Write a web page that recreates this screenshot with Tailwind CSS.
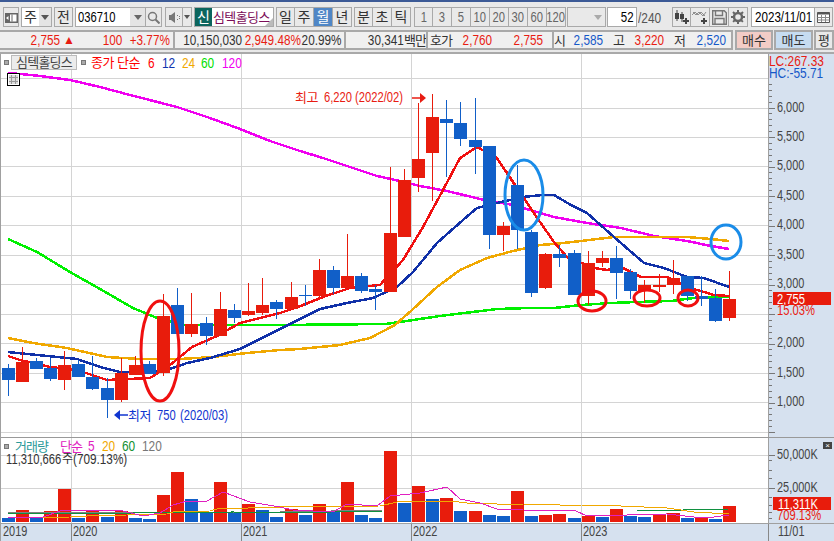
<!DOCTYPE html>
<html lang="ko">
  <head>
    <meta charset="UTF-8" />
    <meta name="viewport" content="width=device-width, initial-scale=1.0" />
    <title>심텍홀딩스 차트</title>
    <script src="https://cdn.jsdelivr.net/npm/@tailwindcss/browser@4"></script>
  </head>
  <body class="w-[834px] h-[541px] overflow-hidden flex flex-col bg-[#e9e9e9] text-[#333] text-[14px] leading-none whitespace-nowrap font-['Liberation_Sans','Noto_Sans_CJK_KR',sans-serif]">
    <!-- title strip -->
    <div class="h-[2px] bg-[#3c5a96]"></div>

    <!-- toolbar -->
    <div class="h-[26px] pt-[5px] flex items-start">
      <div class="ml-[3px] w-[16px] h-[20px] border border-[#a9a9a9] flex items-center justify-center">
        <svg width="13" height="13" viewBox="0 0 13 13"><path d="M0 2h13v10H0z" fill="#666"/><path d="M5 3.500h6.500v7H5z" fill="#fff"/><path d="M7 3.500v7" stroke="#666"/><path d="M3.500 5L1 7l2.500 2z" fill="#fff"/></svg>
      </div>
      <div class="ml-[2px] w-[31px] h-[20px] border border-[#a9a9a9] flex">
        <div class="w-[17px] bg-white flex items-center justify-center">주</div>
        <div class="flex-1 bg-[#e4e4e4] flex items-center justify-center"><div class="border-x-[4px] border-x-transparent border-t-[5px] border-t-[#555]"></div></div>
      </div>
      <div class="ml-[2px] w-[19px] h-[20px] border border-[#a9a9a9] flex items-center justify-center">전</div>
      <div class="ml-[2px] w-[87px] h-[20px] border border-[#a9a9a9] flex">
        <div class="w-[54px] bg-white flex items-center pl-[2px] text-black"><span class="origin-left scale-x-[.8]">036710</span></div>
        <div class="w-[15px] bg-[#e4e4e4] flex items-center justify-center"><div class="border-x-[4px] border-x-transparent border-t-[5px] border-t-[#666]"></div></div>
        <div class="flex-1 border-l border-[#a9a9a9] flex items-center justify-center">
          <svg width="13" height="13" viewBox="0 0 13 13" fill="none" stroke="#777"><circle cx="5.500" cy="5.500" r="4" stroke-width="1.500"/><path d="M8.500 8.500L12.500 12.500" stroke-width="2"/></svg>
        </div>
      </div>
      <div class="ml-[3px] w-[27px] h-[20px] border border-[#a9a9a9] flex">
        <div class="w-[16px] flex items-center justify-center">
          <svg width="13" height="13" viewBox="0 0 13 13" fill="#777"><path d="M1 4h2l4-3v11L3 9H1z"/><path d="M9 4h1v1H9zM11 5h1v1h-1zM9 8h1v1H9zM11 7h1v1h-1z"/></svg>
        </div>
        <div class="flex-1 flex items-center justify-center border-l border-[#a9a9a9]"><div class="border-x-[3px] border-x-transparent border-t-[4px] border-t-[#555]"></div></div>
      </div>
      <div class="ml-[2px] w-[80px] h-[20px] border border-[#a9a9a9] flex relative">
        <div class="w-[17px] bg-[#0b655d] text-white flex items-center justify-center">신</div>
        <div class="flex-1 bg-white text-[#7b0c58] flex items-center pl-[1px] text-[13px] tracking-[-0.6px]">심텍홀딩스</div>
        <div class="absolute right-0 bottom-0 border-l-[8px] border-l-transparent border-b-[8px] border-b-[#bbb]"></div>
      </div>
      <div class="ml-[2px] flex">
        <div class="w-[19px] h-[20px] border border-[#a9a9a9] flex items-center justify-center">일</div>
        <div class="w-[19px] h-[20px] border border-l-0 border-[#a9a9a9] flex items-center justify-center">주</div>
        <div class="w-[19px] h-[20px] border border-l-0 border-[#a9a9a9] bg-[#4f86c6] text-white flex items-center justify-center">월</div>
        <div class="w-[19px] h-[20px] border border-l-0 border-[#a9a9a9] flex items-center justify-center">년</div>
      </div>
      <div class="ml-[2px] flex">
        <div class="w-[19px] h-[20px] border border-[#a9a9a9] flex items-center justify-center">분</div>
        <div class="w-[19px] h-[20px] border border-l-0 border-[#a9a9a9] flex items-center justify-center">초</div>
        <div class="w-[19px] h-[20px] border border-l-0 border-[#a9a9a9] flex items-center justify-center">틱</div>
      </div>
      <div class="ml-[3px] flex text-[#666]">
        <div class="w-[19px] h-[20px] border border-[#a9a9a9] flex items-center justify-center"><span class="scale-x-[.8]">1</span></div>
        <div class="w-[19px] h-[20px] border border-l-0 border-[#a9a9a9] flex items-center justify-center"><span class="scale-x-[.8]">3</span></div>
        <div class="w-[19px] h-[20px] border border-l-0 border-[#a9a9a9] flex items-center justify-center"><span class="scale-x-[.8]">5</span></div>
        <div class="w-[19px] h-[20px] border border-l-0 border-[#a9a9a9] flex items-center justify-center"><span class="scale-x-[.8]">10</span></div>
        <div class="w-[19px] h-[20px] border border-l-0 border-[#a9a9a9] flex items-center justify-center"><span class="scale-x-[.8]">20</span></div>
        <div class="w-[19px] h-[20px] border border-l-0 border-[#a9a9a9] flex items-center justify-center"><span class="scale-x-[.8]">30</span></div>
        <div class="w-[19px] h-[20px] border border-l-0 border-[#a9a9a9] flex items-center justify-center"><span class="scale-x-[.8]">60</span></div>
        <div class="w-[19px] h-[20px] border border-l-0 border-[#a9a9a9] flex items-center justify-center"><span class="scale-x-[.8]">120</span></div>
      </div>
      <div class="ml-[1px] w-[39px] h-[20px] border border-[#a9a9a9] flex justify-end">
        <div class="w-[14px] flex items-center justify-center"><div class="border-x-[4px] border-x-transparent border-t-[5px] border-t-[#aaa]"></div></div>
      </div>
      <div class="ml-[1px] w-[30px] h-[20px] border border-[#a9a9a9] bg-white text-black flex items-center justify-end pr-[2px]"><span class="origin-right scale-x-[.82]">52</span></div>
      <div class="w-[32px] text-[#555] pt-[4px] pl-[1px]"><span class="block origin-left scale-x-[.85]">/240</span></div>
      <div class="ml-[3px] flex">
        <div class="w-[19px] h-[20px] border border-[#a9a9a9] flex items-center justify-center">
          <svg width="16" height="15" viewBox="0 0 16 15"><path d="M3 0v11M8 2v10" stroke="#444"/><path d="M1 3h4v6H1zM6 4h4v5H6z" fill="#444"/><path d="M12 8v6M9 11h6" stroke="#444" stroke-width="2"/></svg>
        </div>
        <div class="w-[19px] h-[20px] border border-l-0 border-[#a9a9a9] flex items-center justify-center">
          <svg width="16" height="15" viewBox="0 0 16 15" fill="none"><path d="M0 5l3-3 3 3 3-3 4 4M1 2l3 3 3-3 4 4 3-4" stroke="#777" stroke-width=".8"/><path d="M12 8v6M9 11h6" stroke="#444" stroke-width="2"/></svg>
        </div>
        <div class="w-[19px] h-[20px] border border-l-0 border-[#a9a9a9] flex items-center justify-center">
          <svg width="15" height="15" viewBox="0 0 15 15"><path d="M.7.700h11.500l2.100 2.100v11.500H.7z" fill="none" stroke="#777" stroke-width="1.400"/><path d="M3.500 1v4.500h7V1M3 14V8.500h9V14" fill="none" stroke="#777" stroke-width="1.400"/></svg>
        </div>
        <div class="w-[19px] h-[20px] border border-l-0 border-[#a9a9a9] flex items-center justify-center">
          <svg width="14" height="14" viewBox="0 0 14 14"><circle cx="7" cy="7" r="4" fill="none" stroke="#666" stroke-width="2.500"/><path d="M7 0v14M0 7h14M2 2l10 10M12 2L2 12" stroke="#666" stroke-width="2" stroke-dasharray="2.500 9 2.500"/></svg>
        </div>
      </div>
      <div class="ml-[3px] w-[64px] h-[20px] border border-[#a9a9a9] bg-white text-black flex items-center pl-[3px]"><span class="origin-left scale-x-[.83]">2023/11/01</span></div>
      <div class="w-[18px] h-[20px] border border-l-0 border-[#a9a9a9] flex items-center justify-center">
        <svg width="13" height="12" viewBox="0 0 13 12"><path d="M.5 1.500h12v10H.5z" fill="#fff" stroke="#555"/><path d="M.5 2.500h12" stroke="#555" stroke-width="2"/><path d="M.5 6.500h12M.5 9h12M4.500 4v7M8.500 4v7" stroke="#888"/></svg>
      </div>
    </div>

    <!-- quote row -->
    <div class="h-[22px] pt-[2px] flex">
      <div class="w-[173px] h-[20px] bg-[#f0f0f0] border-y-2 border-[#a9a9a9] flex items-center text-[#e81c12]">
        <span class="w-[60px] flex justify-end"><span class="origin-right scale-x-[.84]">2,755</span></span>
        <span class="w-[15px] text-right text-[12px]">▲</span>
        <span class="w-[47px] flex justify-end"><span class="origin-right scale-x-[.84]">100</span></span>
        <span class="w-[48px] flex justify-end"><span class="origin-right scale-x-[.84]">+3.77%</span></span>
      </div>
      <div class="w-[171px] h-[20px] bg-[#f0f0f0] border-2 border-r-0 border-[#a9a9a9] flex items-center">
        <span class="w-[67px] flex justify-end"><span class="origin-right scale-x-[.84]">10,150,030</span></span>
        <span class="w-[59px] flex justify-end text-[#e81c12]"><span class="origin-right scale-x-[.84]">2,949.48%</span></span>
        <span class="w-[40px] flex justify-end"><span class="origin-right scale-x-[.84]">20.99%</span></span>
      </div>
      <div class="w-[82px] h-[20px] bg-[#f0f0f0] border-2 border-r-0 border-[#a9a9a9] flex items-center justify-end">
        <span class="origin-right scale-x-[.84]">30,341</span><span class="text-[13px] tracking-[-1px]">백만</span>
      </div>
      <div class="w-[126px] h-[20px] bg-[#f0f0f0] border-2 border-r-0 border-[#a9a9a9] flex items-center">
        <span class="w-[24px] text-[13px] text-right tracking-[-1px]">호가</span>
        <span class="w-[40px] flex justify-end text-[#e81c12]"><span class="origin-right scale-x-[.84]">2,760</span></span>
        <span class="w-[51px] flex justify-end text-[#e81c12]"><span class="origin-right scale-x-[.84]">2,755</span></span>
      </div>
      <div class="w-[181px] h-[20px] bg-[#f0f0f0] border-2 border-[#a9a9a9] flex items-center">
        <span class="w-[11px] text-[13px] text-right">시</span>
        <span class="w-[38px] flex justify-end text-[#1558c8]"><span class="origin-right scale-x-[.84]">2,585</span></span>
        <span class="w-[22px] text-[13px] text-right">고</span>
        <span class="w-[39px] flex justify-end text-[#e81c12]"><span class="origin-right scale-x-[.84]">3,220</span></span>
        <span class="w-[22px] text-[13px] text-right">저</span>
        <span class="w-[40px] flex justify-end text-[#1558c8]"><span class="origin-right scale-x-[.84]">2,520</span></span>
      </div>
      <div class="ml-[2px] w-[38px] h-[20px] bg-[#f2ccc6] border-2 border-[#a9a9a9] flex items-center justify-center text-[13px]">매수</div>
      <div class="ml-[1px] w-[39px] h-[20px] bg-[#c6dcf1] border-2 border-[#a9a9a9] flex items-center justify-center text-[13px]">매도</div>
      <div class="ml-[1px] w-[20px] h-[20px] border-2 border-[#a9a9a9] flex items-center justify-center text-[13px]">평</div>
    </div>

    <!-- chart -->
    <div class="mt-[2px] border-t-[2px] border-[#a9a9a9] h-[489px] relative bg-white shrink-0">
      <svg id="chart" class="block" width="834" height="487" viewBox="0 54 834 487"></svg>

      <!-- price legend -->
      <div class="absolute left-[4px] top-[1px] flex items-center">
        <div class="w-[5px] h-[5px] bg-[#aaa] border border-[#777]"></div>
        <div class="ml-[2px] w-[66px] h-[15px] bg-[#ececec] border border-[#bbb] text-[13px] text-[#444] flex items-center justify-center tracking-[-0.8px]">심텍홀딩스</div>
        <div class="ml-[4px] w-[5px] h-[5px] bg-[#aaa] border border-[#777]"></div>
        <span class="ml-[5px] w-[57px] text-[13px] text-[#f00] tracking-[-0.5px]">종가 단순</span>
        <span class="w-[14px] origin-left scale-x-[.85] text-[#f00]">6</span>
        <span class="w-[20px] origin-left scale-x-[.85] text-[#1035b0]">12</span>
        <span class="w-[19px] origin-left scale-x-[.85] text-[#f0a800]">24</span>
        <span class="w-[21px] origin-left scale-x-[.85] text-[#00e000]">60</span>
        <span class="origin-left scale-x-[.85] text-[#f000f0]">120</span>
      </div>
      <div class="absolute left-[7px] top-[19px] w-[13px] h-[13px] border border-black bg-white p-[1px]">
        <div class="w-full h-full bg-[#999] grid grid-cols-3 grid-rows-3 gap-[1px]">
          <div class="bg-[#ddd]"></div><div class="bg-[#ddd]"></div><div class="bg-[#ddd]"></div>
          <div class="bg-[#ddd]"></div><div class="bg-[#ddd]"></div><div class="bg-[#ddd]"></div>
          <div class="bg-[#ddd]"></div><div class="bg-[#ddd]"></div><div class="bg-[#ddd]"></div>
        </div>
      </div>

      <!-- price annotations -->
      <div class="absolute left-[295px] top-[36px] flex items-center text-[#e81c12]">
        <span class="w-[29px] text-[13px] tracking-[-0.5px]">최고</span>
        <span class="w-[31px] origin-left scale-x-[.8]">6,220</span>
        <span class="origin-left scale-x-[.8]">(2022/02)</span>
      </div>
      <div class="absolute left-[128px] top-[354px] flex items-center text-[#1035d0]">
        <span class="w-[29px] text-[13px] tracking-[-0.5px]">최저</span>
        <span class="w-[23px] origin-left scale-x-[.8]">750</span>
        <span class="origin-left scale-x-[.8]">(2020/03)</span>
      </div>

      <!-- LC / HC -->
      <div class="absolute left-[769px] top-[1px] h-[12px] leading-[12px] origin-left scale-x-[.85] text-[#e81c12]">LC:267.33</div>
      <div class="absolute left-[769px] top-[13px] h-[12px] leading-[12px] origin-left scale-x-[.85] text-[#1558c8]">HC:-55.71</div>

      <!-- current price tag -->
      <div class="absolute left-[773px] top-[238px] w-[58px] h-[13px] bg-[#e81c0c] text-white flex items-center pl-[4px]"><span class="origin-left scale-x-[.8]">2,755</span></div>
      <div class="absolute left-[777px] top-[251px] h-[11px] leading-[11px] origin-left scale-x-[.8] text-[#e81c12]">15.03%</div>

      <!-- volume legend -->
      <div class="absolute left-[4px] top-[385px] flex items-center">
        <div class="w-[5px] h-[5px] bg-[#aaa] border border-[#777]"></div>
        <span class="ml-[6px] w-[45px] text-[13px] text-[#2a9a9a] tracking-[-1px]">거래량</span>
        <span class="w-[28px] text-[13px] text-[#e020c0] tracking-[-1px]">단순</span>
        <span class="w-[14px] origin-left scale-x-[.85] text-[#e020c0]">5</span>
        <span class="w-[20px] origin-left scale-x-[.85] text-[#f0a800]">20</span>
        <span class="w-[20px] origin-left scale-x-[.85] text-[#109030]">60</span>
        <span class="origin-left scale-x-[.85] text-[#777]">120</span>
      </div>
      <div class="absolute left-[6px] top-[398px] flex items-center text-[#333]">
        <span class="w-[56px] origin-left scale-x-[.8]">11,310,666</span>
        <span class="w-[11px] text-[12px]">주</span>
        <span class="origin-left scale-x-[.84]">(709.13%)</span>
      </div>

      <!-- volume tag -->
      <div class="absolute left-[773px] top-[443px] w-[58px] h-[13px] bg-[#e81c0c] text-white flex items-center pl-[5px]"><span class="origin-left scale-x-[.8]">11,311K</span></div>
      <div class="absolute left-[777px] top-[456px] h-[11px] leading-[11px] origin-left scale-x-[.8] text-[#e81c12]">709.13%</div>
      <div class="absolute left-[823px] top-[388px] w-[9px] h-[7px] bg-[#444] text-white text-[8px] flex items-center justify-center">×</div>

      <!-- x axis -->
      <div class="absolute left-[3px] top-[470px] origin-left scale-x-[.78] text-[#444]">2019</div>
      <div class="absolute left-[73px] top-[470px] origin-left scale-x-[.78] text-[#444]">2020</div>
      <div class="absolute left-[243px] top-[470px] origin-left scale-x-[.78] text-[#444]">2021</div>
      <div class="absolute left-[413px] top-[470px] origin-left scale-x-[.78] text-[#444]">2022</div>
      <div class="absolute left-[583px] top-[470px] origin-left scale-x-[.78] text-[#444]">2023</div>
      <div class="absolute left-[778px] top-[470px] origin-left scale-x-[.78] text-[#444]">11/01</div>
    </div>

    <script>
      // [x, bodyTop, bodyBottom, wickTop, wickBottom, color]
      const candles = [
        [2,368,380,364,396,"b"],[16,362,382,347,382,"r"],[30,361,369,358,369,"b"],[44,368,379,358,381,"b"],
        [58,365,380,351,390,"r"],[72,364,377,360,377,"b"],[86,377,389,356,390,"b"],[101,388,400,378,418,"b"],
        [115,373,400,358,402,"r"],[129,365,375,356,375,"r"],[143,364,374,361,374,"b"],[157,316,373,294,376,"r"],
        [171,305,334,288,334,"b"],[185,324,334,293,337,"r"],[200,323,336,317,345,"b"],[214,309,336,292,336,"r"],
        [228,310,318,304,323,"b"],[242,311,315,283,316,"r"],[256,305,313,278,315,"r"],[270,302,309,300,319,"b"],
        [285,297,309,282,309,"r"],[299,295,296,285,306,"b"],[313,270,296,259,298,"r"],[327,270,288,266,294,"b"],
        [341,276,288,234,288,"r"],[355,276,291,273,293,"b"],[369,289,292,285,310,"b"],[384,233,292,167,292,"r"],
        [398,180,237,169,237,"r"],[412,159,178,103,192,"r"],[426,117,153,94,201,"r"],[440,119,123,100,177,"b"],
        [454,123,139,102,146,"b"],[469,140,147,98,174,"b"],[483,146,235,146,249,"b"],[497,226,235,222,251,"r"],
        [511,185,230,165,249,"b"],[525,232,293,230,297,"b"],[539,254,288,253,289,"r"],[553,254,258,245,267,"b"],
        [568,253,295,250,295,"b"],[582,263,296,251,305,"r"],[596,258,263,251,267,"r"],[610,258,273,246,299,"b"],
        [624,272,291,269,299,"b"],[638,285,291,280,303,"r"],[653,285,287,274,292,"r"],[667,278,285,260,294,"r"],
        [681,276,296,276,301,"b"],[695,296,299,276,306,"b"],[709,298,321,289,322,"b"],[723,299,318,271,321,"r"],
      ];
      // volume bar tops, same order as candles
      const volumes = [
        [518,"b"],[510,"r"],[518,"b"],[511,"r"],[489,"r"],[518,"b"],[511,"r"],[517,"b"],[511,"r"],[518,"b"],
        [519,"b"],[495,"r"],[472,"r"],[499,"b"],[513,"b"],[482,"r"],[512,"b"],[504,"r"],[510,"b"],[517,"b"],
        [509,"r"],[515,"b"],[504,"r"],[511,"b"],[482,"r"],[515,"b"],[518,"b"],[451,"r"],[503,"b"],[486,"r"],
        [499,"b"],[498,"r"],[511,"b"],[511,"r"],[515,"b"],[516,"b"],[491,"r"],[516,"b"],[515,"r"],[514,"r"],
        [518,"b"],[516,"r"],[517,"b"],[509,"r"],[516,"b"],[517,"b"],[515,"r"],[513,"r"],[518,"b"],[518,"r"],
        [519,"b"],[506,"r"],
      ];
      const lines = [
        // 120 / 60 / 24 / 12 / 6 moving averages
        ["#f000f0", 2.5, "8,73 20,74 40,76 70,80 100,87 130,95 177,107 210,118 240,129 270,141 300,151 323,158 347,166 377,176 400,181 420,186 447,191 480,199 513,205 554,217 587,223 621,228 654,236 687,241 711,246 729,249"],
        ["#00f000", 2.5, "8,239 37,252 70,272 100,289 133,308 157,318 185,325 280,325 385,324 400,322 440,316 497,309 530,308 554,308 581,305 611,303 637,302 671,301 694,298 729,297"],
        ["#f0a800", 2.5, "8,338 33,343 67,348 107,357 140,359 180,359 213,357 247,353 280,350 300,349 340,345 370,338 395,325 412,310 437,287 460,270 487,258 513,251 540,245 554,244 581,241 614,237 637,237 687,237 711,239 729,241"],
        ["#1030a8", 2.5, "8,352 37,355 77,359 100,367 120,372 150,372 167,370 187,363 210,358 240,349 280,329 320,309 347,303 373,298 397,287 413,272 437,243 463,220 477,208 497,203 523,197 543,195 554,195 571,205 587,213 614,237 644,263 664,268 687,277 704,278 729,287"],
        ["#f01010", 2.5, "8,356 20,360 50,367 77,370 107,380 150,378 170,365 192,347 217,336 240,323 280,313 298,307 323,297 350,288 380,285 403,260 423,227 443,190 460,158 477,147 497,158 523,197 540,222 554,242 567,257 594,268 607,270 621,267 641,277 667,277 687,287 714,295 729,296"],
      ];
      const volLines = [
        ["#808080", 1, "8,512 280,512 383,510 729,510"],
        ["#109040", 1, "8,513 133,513 233,512 280,513 383,511 637,511 729,509"],
        ["#f0a800", 1, "8,518 70,517 87,516 167,514 173,512 210,511 217,509 280,507 380,506 397,502 423,501 450,501 467,503 497,504 523,504 560,505 581,505 621,506 667,508 694,512 729,514"],
        ["#e020c0", 1, "8,518 43,517 63,510 113,510 123,511 143,516 160,513 173,505 187,501 207,501 223,492 250,502 280,507 293,510 333,512 347,504 377,506 390,496 420,493 447,487 460,499 480,503 497,509 523,510 576,511 587,516 667,514 694,517 714,517 729,515"],
      ];
      const ellipses = [
        [160,351,19,50,"#f01010",3],[592,301,14,10,"#f01010",3],[647,298,13,8,"#f01010",3],[688,298,10,8,"#f01010",3],
        [524,195,19,35,"#1a8ce8",3],[726,242,15,17,"#1a8ce8",3],
      ];
      const RED = "#e81c0c", BLUE = "#115fc8", GRID = "#d4d4d4", AXIS = "#a0a0a0";
      const rect = (x, y, w, h, c) => `<rect x="${x}" y="${y}" width="${w}" height="${h}" fill="${c}" shape-rendering="crispEdges"/>`;
      const label = (x, y, t) => `<text transform="translate(${x} ${y}) scale(.78 1)" font-size="14" fill="#444">${t}</text>`;
      const line = ([c, w, p]) => `<polyline points="${p}" fill="none" stroke="${c}" stroke-width="${w}" shape-rendering="crispEdges"/>`;
      let s = "";

      // grid
      [78,108,137,166,196,225,255,284,314,343,373,402,432].forEach((y) => (s += rect(0, y, 768, 1, GRID)));
      [455,488].forEach((y) => (s += rect(0, y, 768, 1, GRID)));
      [71,241,411,581].forEach((x) => (s += rect(x, 54, 1, 469, GRID)));

      // moving averages sit under the candles
      lines.forEach((l) => (s += line(l)));

      candles.forEach(([x, t, b, wt, wb, c]) => {
        const col = c === "r" ? RED : BLUE;
        s += rect(x + 6, wt, 1, wb - wt, col);
        s += rect(x, t, 13, Math.max(b - t, 1), col);
      });

      ellipses.forEach(([x, y, rx, ry, c, w]) => (s += `<ellipse cx="${x}" cy="${y}" rx="${rx}" ry="${ry}" fill="none" stroke="${c}" stroke-width="${w}"/>`));

      // high / low arrows
      s += `<path d="M412 98h9" stroke="#e81c12" stroke-width="1.5"/><path d="M426 98l-6-5v10z" fill="#e81c12"/>`;
      s += `<path d="M128 415h-9" stroke="#1035d0" stroke-width="1.5"/><path d="M114 415l6-5v10z" fill="#1035d0"/>`;

      // volume panel
      s += rect(0, 437, 768, 1, "#999");
      volumes.forEach(([top, c], i) => (s += rect(candles[i][0], top, 13, 522 - top, c === "r" ? RED : BLUE)));
      volLines.forEach((l) => (s += line(l)));

      // right axis
      s += rect(768, 54, 66, 487, "#d6e1ef");
      s += rect(768, 54, 1, 487, AXIS);
      for (let v = 0; v <= 64; v++) {
        const y = Math.round(432 - v * 5.9);
        if (y < 80) break;
        s += rect(769, y, v % 5 == 0 ? 6 : 3, 1, "#777");
      }
      [[6000,108],[5500,137],[5000,166],[4500,196],[4000,225],[3500,255],[3000,284],[2000,343],[1500,373],[1000,402]].forEach(([v, y]) => {
        s += label(777, y + 4, v.toLocaleString("en-US"));
      });
      s += rect(768, 437, 66, 1, "#999");
      [460,470,478,497,505,512,518].forEach((y) => (s += rect(769, y, 3, 1, "#777")));
      s += rect(769, 455, 6, 1, "#777") + rect(769, 488, 6, 1, "#777");
      s += label(777, 459, "50,000K") + label(777, 492, "25,000K");

      // time axis
      s += rect(0, 523, 834, 1, AXIS);
      s += rect(0, 524, 768, 17, "#d6e1ef");
      [71,241,411,581,768].forEach((x) => (s += rect(x, 524, 1, 17, "#888")));
      s += rect(0, 54, 1, 487, AXIS);

      document.getElementById("chart").innerHTML = s;
    </script>
  </body>
</html>
